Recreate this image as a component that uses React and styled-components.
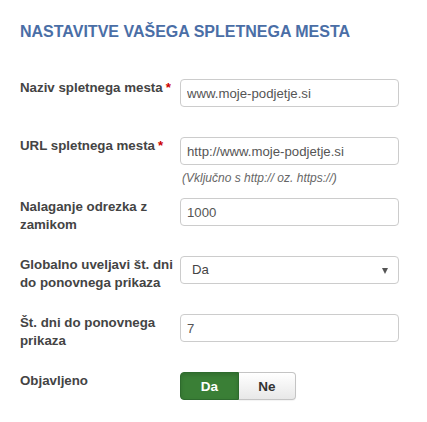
import React from "react";
import styled, { createGlobalStyle } from "styled-components";

const Global = createGlobalStyle`
  html, body { margin: 0; padding: 0; background: #fff; }
  body { font-family: "Liberation Sans", Arial, sans-serif; color: #333; }
  * { box-sizing: border-box; }
`;

const Page = styled.div`
  padding: 20px 28px 0 20px;
  width: 427px;
`;

const Title = styled.h2`
  margin: 0 0 35px 0;
  font-size: 16px;
  line-height: 24px;
  font-weight: bold;
  color: #4a6ea6;
`;

const Row = styled.div`
  display: flex;
  align-items: flex-start;
  min-height: 36px;
  margin-bottom: ${(p) => p.$mb ?? 22}px;
`;

const Label = styled.label`
  width: 160px;
  flex: none;
  padding-right: 0;
  font-size: 13.3px;
  line-height: 18px;
  font-weight: bold;
  color: #444;
`;

const Star = styled.span`
  color: #c00;
  margin-left: 3px;
`;

const Controls = styled.div`
  flex: 1;
  display: flex;
  flex-direction: column;
`;

const Input = styled.input`
  height: 28px;
  width: 219px;
  padding: 4px 6px;
  font-family: "Liberation Sans", Arial, sans-serif;
  font-size: 13.2px;
  color: #555;
  border: 1px solid #ccc;
  border-radius: 4px;
  background: #fff;
  outline: none;
`;

const Help = styled.div`
  margin-top: 5px;
  padding-left: 2px;
  font-size: 12px;
  line-height: 16px;
  font-style: italic;
  color: #666;
`;

const SelectBox = styled.div`
  position: relative;
  height: 28px;
  width: 219px;
  border: 1px solid #ccc;
  border-radius: 4px;
  font-size: 13.2px;
  line-height: 26px;
  padding-left: 11px;
  color: #444;
`;

const Arrow = styled.span`
  position: absolute;
  right: 10px;
  top: 11px;
  width: 0;
  height: 0;
  border-left: 3px solid transparent;
  border-right: 3px solid transparent;
  border-top: 6px solid #555;
`;

const Toggle = styled.div`
  display: flex;
  height: 28px;
`;

const ToggleBtn = styled.button`
  width: ${(p) => p.$w}px;
  height: 28px;
  font-family: "Liberation Sans", Arial, sans-serif;
  font-size: 13.5px;
  font-weight: bold;
  padding: 0;
  border: 1px solid ${(p) => (p.$active ? "#2e6b2e" : "#c4c4c4")};
  color: ${(p) => (p.$active ? "#fff" : "#333")};
  background: ${(p) =>
    p.$active ? "#3a7f36" : "linear-gradient(#ffffff, #e8e8e8)"};
  border-radius: ${(p) => (p.$first ? "4px 0 0 4px" : "0 4px 4px 0")};
  ${(p) => (p.$first ? "" : "border-left: none;")}
  box-shadow: ${(p) =>
    p.$active ? "inset 0 2px 4px rgba(0,0,0,0.15)" : "0 1px 1px rgba(0,0,0,0.05)"};
`;

export default function App() {
  return (
    <>
      <Global />
      <Page>
        <Title>NASTAVITVE VAŠEGA SPLETNEGA MESTA</Title>
        <Row>
          <Label>
            Naziv spletnega mesta<Star>*</Star>
          </Label>
          <Controls>
            <Input defaultValue="www.moje-podjetje.si" />
          </Controls>
        </Row>
        <Row $mb={12}>
          <Label>
            URL spletnega mesta<Star>*</Star>
          </Label>
          <Controls>
            <Input defaultValue="http://www.moje-podjetje.si" />
            <Help>(Vključno s http:// oz. https://)</Help>
          </Controls>
        </Row>
        <Row>
          <Label>Nalaganje odrezka z zamikom</Label>
          <Controls>
            <Input defaultValue="1000" />
          </Controls>
        </Row>
        <Row>
          <Label>Globalno uveljavi št. dni do ponovnega prikaza</Label>
          <Controls>
            <SelectBox>
              Da
              <Arrow />
            </SelectBox>
          </Controls>
        </Row>
        <Row>
          <Label>Št. dni do ponovnega prikaza</Label>
          <Controls>
            <Input defaultValue="7" />
          </Controls>
        </Row>
        <Row>
          <Label>Objavljeno</Label>
          <Controls>
            <Toggle>
              <ToggleBtn $active $first $w={59}>
                Da
              </ToggleBtn>
              <ToggleBtn $w={57}>Ne</ToggleBtn>
            </Toggle>
          </Controls>
        </Row>
      </Page>
    </>
  );
}
